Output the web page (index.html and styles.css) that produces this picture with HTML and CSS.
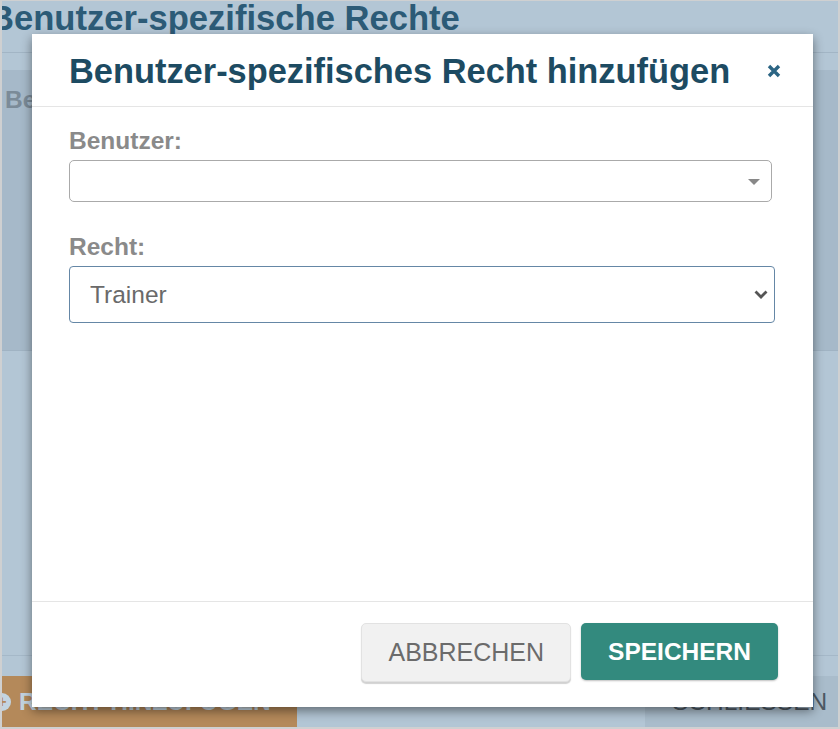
FILE: index.html
```html
<!DOCTYPE html>
<html lang="de">
<head>
    <meta charset="UTF-8">
    <meta name="viewport" content="width=device-width, initial-scale=1.0">
    <title>Benutzer-spezifische Rechte</title>
    <link rel="stylesheet" href="styles.css">
</head>
<body>
    <div class="screen">
        <!-- Seite hinter dem Dialog -->
        <div class="page">
            <h1 class="page-title">Benutzer-spezifische Rechte</h1>
            <div class="page-rule"></div>
            <div class="table-band">
                <span class="table-head">Benutzer</span>
            </div>
            <div class="page-spacer"></div>
            <div class="page-footer">
                <button class="btn-add">
                    <span class="add-icon">+</span>
                    RECHT HINZUFÜGEN
                </button>
                <button class="btn-close-page">SCHLIESSEN</button>
            </div>
        </div>

        <!-- Dialog: Recht hinzufügen -->
        <div class="modal">
            <div class="modal-header">
                <h2 class="modal-title">Benutzer-spezifisches Recht hinzufügen</h2>
                <button class="modal-close" aria-label="Schließen">
                    <svg width="14" height="14" viewBox="0 0 14 14">
                        <path d="M2 2 L12 12 M12 2 L2 12" stroke="currentColor" stroke-width="3.4" fill="none"/>
                    </svg>
                </button>
            </div>
            <div class="modal-body">
                <div class="form-group">
                    <label class="form-label">Benutzer:</label>
                    <div class="select2-box">
                        <span class="select2-arrow"></span>
                    </div>
                </div>
                <div class="form-group">
                    <label class="form-label">Recht:</label>
                    <div class="select-wrap">
                        <select class="form-select">
                            <option>Trainer</option>
                            <option>Administrator</option>
                            <option>Mitglied</option>
                        </select>
                        <svg class="select-chevron" width="14" height="9" viewBox="0 0 14 9">
                            <path d="M1.5 1.5 L7 7 L12.5 1.5" stroke="currentColor" stroke-width="2.8" fill="none"/>
                        </svg>
                    </div>
                </div>
            </div>
            <div class="modal-footer">
                <button class="btn btn-cancel">ABBRECHEN</button>
                <button class="btn btn-save">SPEICHERN</button>
            </div>
        </div>
    </div>
</body>
</html>
```

FILE: styles.css
```css
body {
    margin: 0;
    font-family: 'Liberation Sans', Arial, sans-serif;
}

.screen {
    position: relative;
    width: 840px;
    height: 729px;
    box-sizing: border-box;
    border: 2px solid #cfd0d1;
    border-top-width: 1px;
    background: #b3c6d5;
    overflow: hidden;
}

/* Hintergrundseite (abgedunkelt) */
.page {
    display: flex;
    flex-direction: column;
    height: 100%;
}

.page-title {
    margin: -1px 0 0 -13px;
    font-size: 34.6px;
    line-height: 36px;
    font-weight: bold;
    color: #2c5b77;
    white-space: nowrap;
}

.page-rule {
    margin-top: 16px;
    height: 1px;
    background: #a2b5c5;
}

.table-band {
    margin-top: 17px;
    height: 281px;
    padding: 13px 0 0 3px;
    box-sizing: border-box;
    background: #a6b9c9;
    border-bottom: 1px solid #a0b3c3;
}

.table-head {
    font-size: 24.5px;
    line-height: 34px;
    font-weight: bold;
    color: #7b8b98;
}

.page-spacer {
    flex: 1;
}

.page-footer {
    display: flex;
    border-top: 1px solid #a5b8c8;
    padding-top: 20px;
}

.btn-add {
    display: flex;
    align-items: center;
    gap: 8px;
    width: 295px;
    height: 51px;
    padding: 0;
    border: none;
    background: #b4895a;
    color: #c3d4e1;
    font-family: inherit;
    font-size: 24.5px;
    font-weight: bold;
    white-space: nowrap;
}

.add-icon {
    display: flex;
    align-items: center;
    justify-content: center;
    width: 18px;
    height: 18px;
    margin-left: -9px;
    border-radius: 50%;
    background: #c3d4e1;
    color: #b4895a;
    font-size: 16px;
}

.btn-close-page {
    margin-left: auto;
    margin-right: -18px;
    width: 211px;
    height: 51px;
    padding: 0 0 0 27px;
    border: none;
    background: #a9bccb;
    color: #4e5963;
    font-family: inherit;
    font-size: 24.5px;
    text-align: left;
}

/* Dialog */
.modal {
    position: absolute;
    left: 30px;
    top: 33px;
    width: 781px;
    height: 673px;
    display: flex;
    flex-direction: column;
    background: white;
    box-shadow: 0 4px 10px rgba(0,0,0,0.45);
}

.modal-header {
    display: flex;
    align-items: center;
    justify-content: space-between;
    padding: 19px 32px 16px 37px;
    border-bottom: 1px solid #e5e5e5;
}

.modal-title {
    margin: 0;
    font-size: 34.4px;
    line-height: 37px;
    font-weight: bold;
    color: #1d4b62;
    white-space: nowrap;
}

.modal-close {
    display: flex;
    padding: 0;
    margin-top: -2px;
    border: none;
    background: none;
    color: #2c6584;
}

.modal-body {
    flex: 1;
    padding: 17px 38px 0 37px;
}

.form-group {
    margin-bottom: 28px;
}

.form-label {
    display: block;
    margin-bottom: 2px;
    font-size: 24.5px;
    line-height: 34px;
    font-weight: bold;
    color: #8a8a8a;
}

.select2-box {
    position: relative;
    height: 42px;
    margin-right: 3px;
    box-sizing: border-box;
    border: 1px solid #aaa;
    border-radius: 5px;
}

.select2-arrow {
    position: absolute;
    right: 11px;
    top: 18px;
    border-left: 6px solid transparent;
    border-right: 6px solid transparent;
    border-top: 6px solid #888;
}

.select-wrap {
    position: relative;
}

.form-select {
    display: block;
    width: 100%;
    height: 57px;
    padding: 0 20px;
    box-sizing: border-box;
    border: 1px solid #6587a6;
    border-radius: 4px;
    background: white;
    color: #6a6a6a;
    font-family: inherit;
    font-size: 24.5px;
    appearance: none;
    -webkit-appearance: none;
    outline: none;
}

.select-chevron {
    position: absolute;
    right: 7px;
    top: 24px;
    color: #555;
    pointer-events: none;
}

.modal-footer {
    display: flex;
    justify-content: flex-end;
    gap: 10px;
    padding: 21px 35px 25px;
    border-top: 1px solid #e5e5e5;
}

.btn {
    height: 58px;
    padding: 0 26px;
    border-radius: 5px;
    font-family: inherit;
    font-size: 25px;
    cursor: pointer;
}

.btn-cancel {
    border: 1px solid #e2e2e2;
    background: #f1f1f1;
    color: #6b6b6b;
    box-shadow: 0 2px 1px rgba(0,0,0,0.18);
    height: 59px;
}

.btn-save {
    border: none;
    height: 57px;
    padding: 0 27px;
    background: #338a7e;
    color: white;
    font-size: 24.5px;
    font-weight: bold;
    box-shadow: 0 1px 2px rgba(0,0,0,0.25);
}
```
